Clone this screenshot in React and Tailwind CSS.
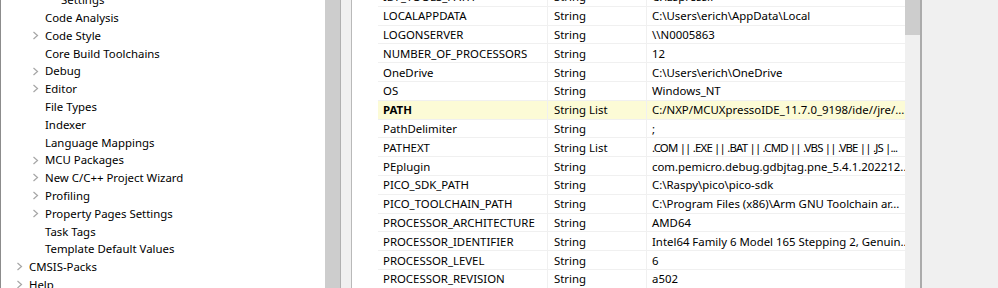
import React from "react";

const tree = [
  { l: 3, t: "Settings", c: false },
  { l: 2, t: "Code Analysis", c: false },
  { l: 2, t: "Code Style", c: true },
  { l: 2, t: "Core Build Toolchains", c: false },
  { l: 2, t: "Debug", c: true },
  { l: 2, t: "Editor", c: true },
  { l: 2, t: "File Types", c: false },
  { l: 2, t: "Indexer", c: false },
  { l: 2, t: "Language Mappings", c: false },
  { l: 2, t: "MCU Packages", c: true },
  { l: 2, t: "New C/C++ Project Wizard", c: true },
  { l: 2, t: "Profiling", c: true },
  { l: 2, t: "Property Pages Settings", c: true },
  { l: 2, t: "Task Tags", c: false },
  { l: 2, t: "Template Default Values", c: false },
  { l: 1, t: "CMSIS-Packs", c: true },
  { l: 1, t: "Help", c: true },
];

const rows = [
  ["IDF_TOOLS_PATH", "String", "C:\\Espressif"],
  ["LOCALAPPDATA", "String", "C:\\Users\\erich\\AppData\\Local"],
  ["LOGONSERVER", "String", "\\\\N0005863"],
  ["NUMBER_OF_PROCESSORS", "String", "12"],
  ["OneDrive", "String", "C:\\Users\\erich\\OneDrive"],
  ["OS", "String", "Windows_NT"],
  ["PATH", "String List", "C:/NXP/MCUXpressoIDE_11.7.0_9198/ide//jre/..."],
  ["PathDelimiter", "String", ";"],
  ["PATHEXT", "String List", ".COM || .EXE || .BAT || .CMD || .VBS || .VBE || .JS |..."],
  ["PEplugin", "String", "com.pemicro.debug.gdbjtag.pne_5.4.1.202212..."],
  ["PICO_SDK_PATH", "String", "C:\\Raspy\\pico\\pico-sdk"],
  ["PICO_TOOLCHAIN_PATH", "String", "C:\\Program Files (x86)\\Arm GNU Toolchain ar..."],
  ["PROCESSOR_ARCHITECTURE", "String", "AMD64"],
  ["PROCESSOR_IDENTIFIER", "String", "Intel64 Family 6 Model 165 Stepping 2, Genuin..."],
  ["PROCESSOR_LEVEL", "String", "6"],
  ["PROCESSOR_REVISION", "String", "a502"],
];

const pad = { 1: "pl-[15px]", 2: "pl-[31px]", 3: "pl-[47px]" };

function Chevron() {
  return (
    <svg width="13" height="9" viewBox="0 0 13 9" className="shrink-0">
      <polyline points="1.5,1 5.5,4.5 1.5,8" fill="none" stroke="#a6a6a6" strokeWidth="1.2" />
    </svg>
  );
}

export default function App() {
  return (
    <div
      className="flex h-[288px] w-[998px] overflow-hidden bg-[#f0f0f0] text-[11.4px] text-black"
      style={{ fontFamily: '"Noto Sans", "Open Sans", sans-serif' }}
    >
      {/* left tree panel */}
      <div className="flex w-[341px] shrink-0 border-l border-[#8c8c8c] bg-white">
        <div className="flex-1 overflow-hidden">
          <div className="-mt-[9px] flex flex-col">
            {tree.map((r, i) => (
              <div key={i} className={`flex h-[17.8px] items-center whitespace-nowrap ${pad[r.l]}`}>
                <span className="flex w-[13px] shrink-0 items-center">{r.c ? <Chevron /> : null}</span>
                <span className="leading-none">{r.t}</span>
              </div>
            ))}
          </div>
        </div>
        <div className="w-[15px] shrink-0 bg-[#cdcdcd]" />
        <div className="w-px shrink-0 bg-[#b0b0b0]" />
      </div>

      <div className="w-[10px] shrink-0 bg-[#f0f0f0]" />
      <div className="w-px shrink-0 bg-[#b9b9b9]" />

      {/* table area */}
      <div className="flex w-[568px] shrink-0 bg-white pl-[26px]">
        <div className="flex-1 overflow-hidden">
          <div className="-mt-[12px] flex flex-col">
            {rows.map((r, i) => {
              const hl = r[0] === "PATH";
              const tight = r[0] === "PATHEXT";
              return (
                <div
                  key={i}
                  className={`flex h-[18.8px] border-b border-[#f0f0f0] ${hl ? "bg-[#fcfbd6]" : ""}`}
                >
                  <div className={`flex w-[170px] shrink-0 items-center overflow-hidden whitespace-nowrap border-r border-[#f0f0f0] pl-[5px] ${hl ? "font-bold" : ""}`}>
                    {r[0]}
                  </div>
                  <div className="flex w-[99px] shrink-0 items-center overflow-hidden whitespace-nowrap border-r border-[#f0f0f0] pl-[6px]">
                    {r[1]}
                  </div>
                  <div className={`flex flex-1 items-center overflow-hidden whitespace-nowrap pl-[5px] ${tight ? "tracking-[-0.8px]" : ""}`}>
                    {r[2]}
                  </div>
                </div>
              );
            })}
          </div>
        </div>
        <div className="flex w-[15px] shrink-0 flex-col bg-[#f0f0f0]">
          <div className="h-[35px] w-full bg-[#cdcdcd]" />
        </div>
      </div>

      <div className="w-[2px] shrink-0 bg-[#ababab]" />
      <div className="flex-1 bg-[#f0f0f0]" />
    </div>
  );
}
